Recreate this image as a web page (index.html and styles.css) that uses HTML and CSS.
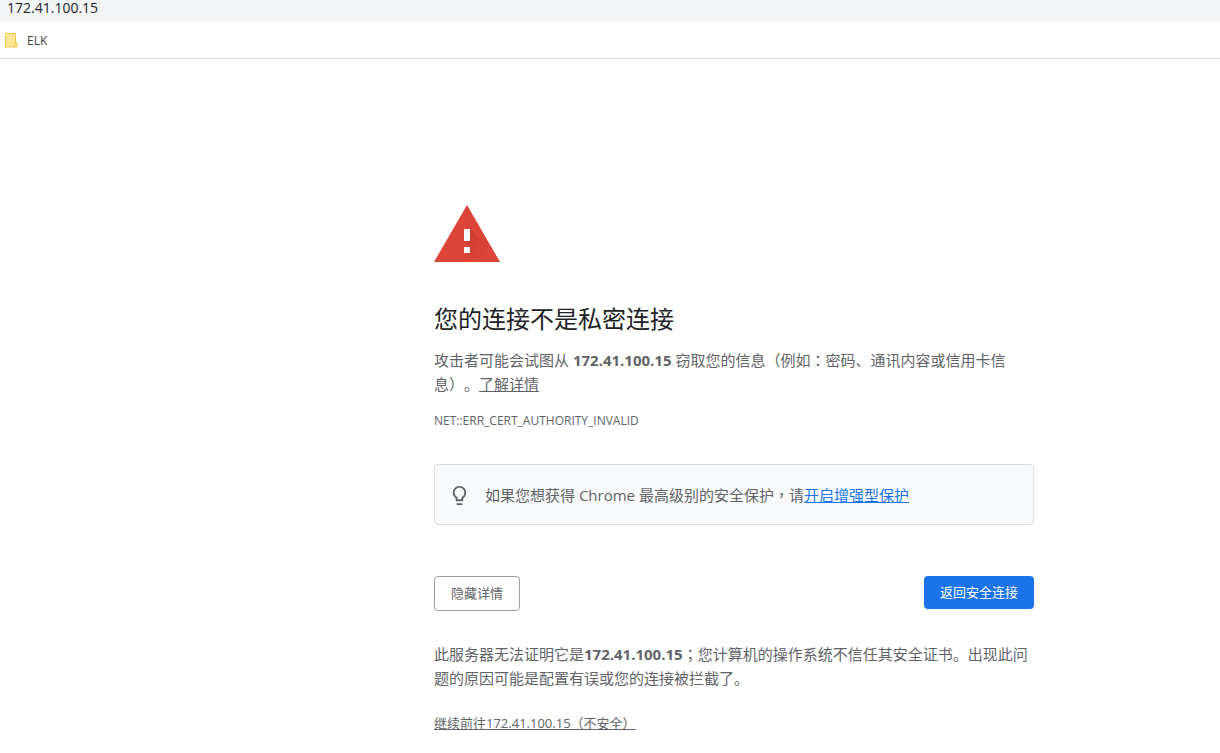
FILE: index.html
```html
<!DOCTYPE html>
<html lang="zh-CN">
<head>
<meta charset="utf-8">
<title>隐私设置错误</title>
<link rel="stylesheet" href="styles.css">
</head>
<body>
<header>
  <div class="address-bar">172.41.100.15</div>
  <nav class="bookmarks">
    <a class="bookmark" href="#">
      <svg class="folder" viewBox="0 0 13 15" aria-hidden="true">
        <path d="M.5.5h10v9.500h1.500v4H.5z" fill="#ffe694" stroke="#ebc64d"/>
        <path d="M9.500 13.500v-3l1-1" fill="none" stroke="#ebc64d"/>
      </svg>
      <span>ELK</span>
    </a>
  </nav>
</header>
<main class="page">
  <div class="interstitial">
    <svg class="warning" viewBox="0 0 66 57" role="img" aria-label="警告">
      <defs>
        <linearGradient id="shade" x1="0" y1="0" x2="1" y2="1">
          <stop offset="0" stop-color="#b8342a" stop-opacity=".6"/>
          <stop offset=".7" stop-color="#b8342a" stop-opacity="0"/>
        </linearGradient>
      </defs>
      <path d="M33 0l33 57H0z" fill="#db4437"/>
      <path d="M36 24l17 17L62.500 57H39l-9-9 6-6-6-6z" fill="url(#shade)"/>
      <path d="M30 24h6v12h-6zM30 42h6v6h-6z" fill="#fff"/>
    </svg>
    <h1 class="title">您的连接不是私密连接</h1>
    <p class="text">攻击者可能会试图从 <strong>172.41.100.15</strong> 窃取您的信息（例如<span class="mid" lang="zh-TW">：</span>密码、通讯内容或信用卡信息）。<a class="link" href="#">了解详情</a></p>
    <div class="code">NET::ERR_CERT_AUTHORITY_INVALID</div>
    <div class="promo">
      <svg class="bulb" viewBox="0 0 24 24" aria-hidden="true">
        <path d="M9 21c0 .5.400 1 1 1h4c.6 0 1-.5 1-1v-1H9v1zm3-19C8.100 2 5 5.100 5 9c0 2.400 1.200 4.500 3 5.700V17c0 .5.400 1 1 1h6c.6 0 1-.5 1-1v-2.300c1.800-1.300 3-3.400 3-5.700 0-3.900-3.100-7-7-7zm2.900 11.100l-.9.600V16h-4v-2.300l-.9-.6C7.800 12.200 7 10.600 7 9c0-2.800 2.200-5 5-5s5 2.200 5 5c0 1.600-.8 3.200-2.100 4.100z" fill="#5f6368"/>
      </svg>
      <p class="promo-text">如果您想获得 Chrome 最高级别的安全保护<span class="mid" lang="zh-TW">，</span>请<a class="promo-link" href="#">开启增强型保护</a></p>
    </div>
    <div class="actions">
      <button class="button secondary" type="button">隐藏详情</button>
      <button class="button primary" type="button">返回安全连接</button>
    </div>
    <p class="text">此服务器无法证明它是<strong>172.41.100.15</strong><span class="mid" lang="zh-TW">；</span>您计算机的操作系统不信任其安全证书。出现此问题的原因可能是配置有误或您的连接被拦截了。</p>
    <p class="proceed"><a class="link" href="#">继续前往172.41.100.15（不安全）</a></p>
  </div>
</main>
</body>
</html>
```
FILE: styles.css
```css
* {
  box-sizing: border-box;
}

body {
  margin: 0;
  background: #fff;
  color: #5f6368;
  font-family: "Open Sans", "Noto Sans CJK SC", sans-serif;
  font-size: 15px;
  line-height: 24px;
  text-spacing-trim: space-all;
}

h1,
p {
  margin: 0;
}

.address-bar {
  height: 22px;
  padding-left: 7px;
  background: #f1f3f4;
  color: #202124;
  font-size: 14px;
  line-height: 16px;
}

.bookmarks {
  display: flex;
  align-items: center;
  height: 37px;
  padding: 1px 0 0 5px;
  border-bottom: 1px solid #dadce0;
}

.bookmark {
  display: flex;
  align-items: center;
  gap: 9px;
  color: #3c4043;
  font-size: 12px;
  text-decoration: none;
}

.folder {
  width: 13px;
  height: 15px;
}

.page {
  padding: 146px 0 16px 248px;
}

.interstitial {
  max-width: 600px;
  margin: 0 auto;
}

.warning {
  display: block;
  width: 66px;
  height: 57px;
}

.title {
  margin-top: 43px;
  color: #202124;
  font-size: 24px;
  font-weight: 400;
  line-height: 28px;
}

.title + .text {
  margin-top: 15px;
}

/* Punctuation centred in its full-width box. */
.mid {
  font-family: "Noto Sans CJK TC", sans-serif;
  line-height: 1;
}

.link {
  color: #5f6368;
  text-decoration: underline;
}

.code {
  margin-top: 13px;
  font-size: 12px;
}

.promo {
  display: flex;
  align-items: center;
  gap: 14px;
  margin-top: 31px;
  padding: 18px 13px 17px;
  border: 1px solid #dadce0;
  border-radius: 4px;
  background: #f8f9fa;
}

.bulb {
  flex: none;
  width: 23px;
  height: 23px;
}

.promo-link {
  color: #1a73e8;
}

.actions {
  display: flex;
  align-items: flex-start;
  justify-content: space-between;
  margin-top: 51px;
}

.button {
  padding: 8px 16px;
  border: 0;
  border-radius: 4px;
  font-family: inherit;
  font-size: 13px;
  line-height: 17px;
}

.secondary {
  border: 1px solid #9aa0a6;
  background: #fff;
  color: #5f6368;
}

.primary {
  background: #1a73e8;
  color: #fff;
}

.actions + .text {
  margin-top: 31px;
}

.proceed {
  margin-top: 21px;
  font-size: 13px;
}
```
